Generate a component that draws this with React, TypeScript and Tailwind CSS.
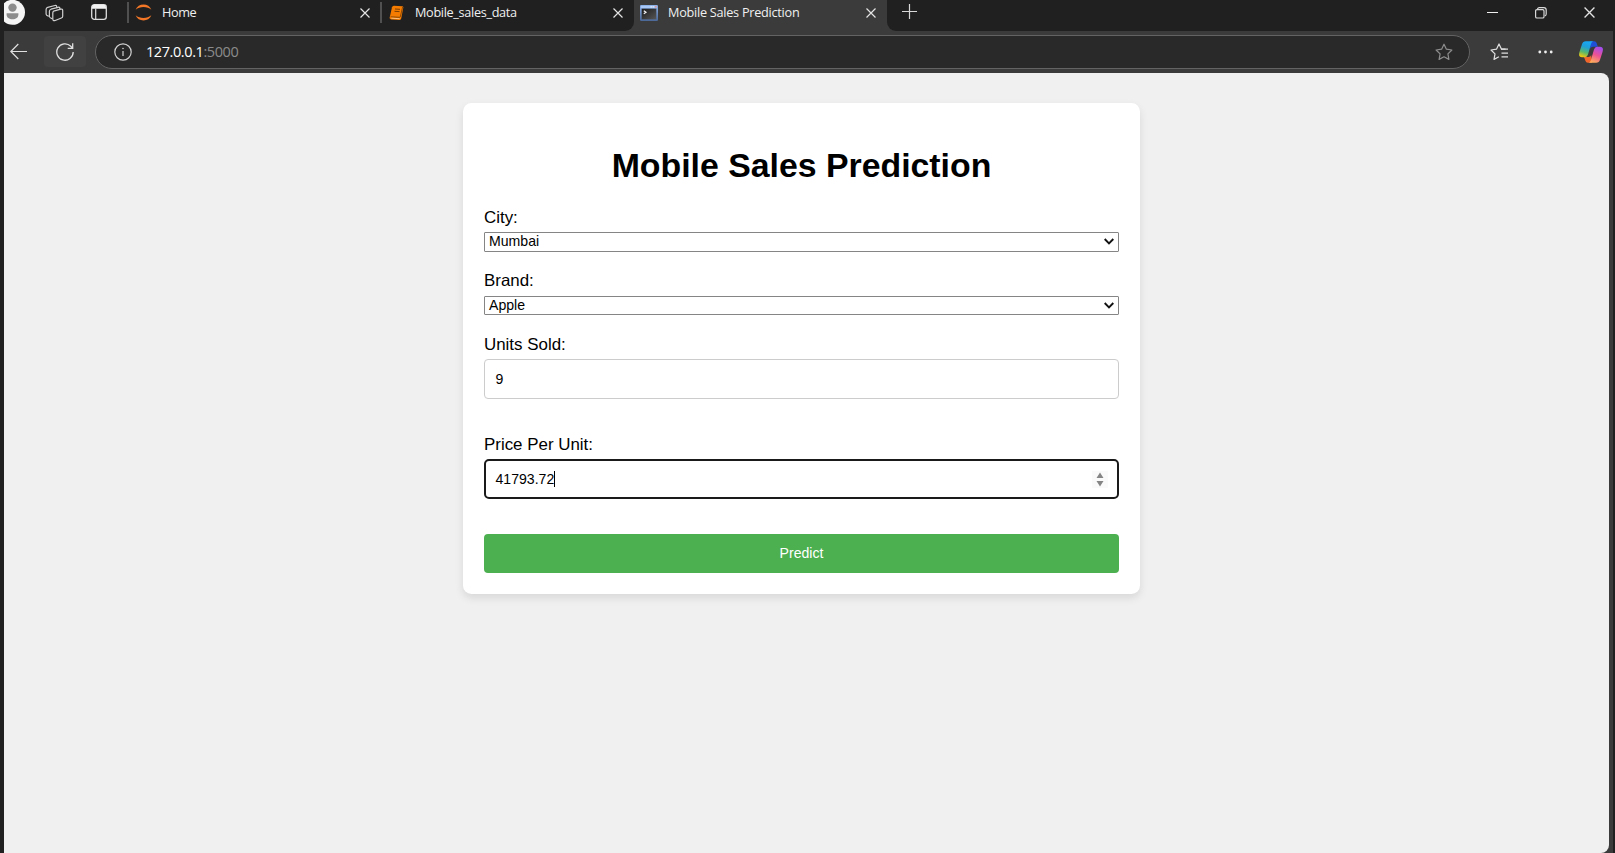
import type { ReactNode } from 'react';

function CloseIcon({ size = 10 }: { size?: number }) {
  return (
    <svg width={size} height={size} viewBox="0 0 10 10" fill="none" stroke="#e4e4e4" strokeWidth="1.2">
      <path d="M0.5 0.5L9.5 9.5M9.5 0.5L0.5 9.5" />
    </svg>
  );
}

function ProfileIcon() {
  return (
    <svg width="21" height="25" viewBox="4 0 21 25">
      <circle cx="12.5" cy="12.3" r="12.5" fill="#f5f5f5" />
      <circle cx="12.5" cy="7.6" r="4.2" fill="#8c8c8c" />
      <path d="M6.6 13.3h11.8v1.2c0 3.2-2.6 4.7-5.9 4.7s-5.9-1.5-5.9-4.7z" fill="#8c8c8c" />
    </svg>
  );
}

function WorkspacesIcon() {
  return (
    <svg width="20" height="20" viewBox="0 0 20 20" fill="none" stroke="#cfcfcf" strokeWidth="1.2" strokeLinejoin="round" strokeLinecap="round">
      <path d="M9.600 8.200l7.200-2q1.900-.4 1.900 1.300v5.800q0 1.300-1.300 1.700l-6.200 2.500q-2.400.8-2.400-1.500v-6q0-1.400.8-1.800z" />
      <path d="M15.900 6v-.6q-.2-1.500-1.800-1.100L7 6.200Q5.400 6.700 5.400 8.300v5.200q.2 1.500 2.600 2.100" />
      <path d="M12.700 4.200v-.7q-.2-1.400-1.800-1L3.700 4.400Q2.100 4.900 2.100 6.500v4.700q.2 1.500 2.300 2" />
    </svg>
  );
}

function TabActionsIcon() {
  return (
    <svg width="16" height="16" viewBox="0 0 16 16" fill="none">
      <rect x="0.700" y="0.700" width="14.600" height="14.600" rx="2.600" stroke="#dedede" strokeWidth="1.300" />
      <path d="M1 4.800V3q0-2.300 2.300-2.300h9.400Q15 .7 15 3v1.800z" fill="#f2f2f2" />
      <path d="M4.700 4.500v10.800" stroke="#dedede" strokeWidth="1.200" />
    </svg>
  );
}

function JupyterIcon() {
  return (
    <svg width="17" height="17" viewBox="0 0 17 17" fill="#f37726">
      <path d="M0.600 5.700C2 2.300 5 .5 8.500.5s6.500 1.800 7.900 5.200C14.300 4 11.500 3.100 8.500 3.100S2.700 4 .6 5.700z" />
      <path d="M0.600 11.300c1.400 3.400 4.400 5.200 7.900 5.200s6.500-1.800 7.900-5.200c-2.100 1.700-4.900 2.600-7.900 2.600s-5.800-.9-7.900-2.600z" />
    </svg>
  );
}

function NotebookIcon() {
  return (
    <svg width="15" height="16" viewBox="0 0 15 16">
      <path d="M4.800.8L13.300 1.200q1.200.1 1 1.400L12.200 13.600q-.3 1.400-1.500 1.400L2 14.400Q.4 14.200.7 12.500L3 2.300Q3.400.8 4.800.8z" fill="#f57c00" />
      <path d="M1.600 11.800l8.800.5q.8 0 1-.8L13.600 2" fill="none" stroke="#5a2f06" strokeWidth="0.700" />
      <path d="M2.300 13.200l8.300.5" stroke="#ffd9b0" strokeWidth="0.700" />
      <path d="M6 4l5 .3M5.500 6.300l5 .3" stroke="#6d3805" strokeWidth="0.900" />
    </svg>
  );
}

function TerminalIcon() {
  return (
    <svg width="18" height="16" viewBox="0 0 18 16">
      <defs>
        <linearGradient id="termFrame" x1="0" y1="0" x2="0" y2="1">
          <stop offset="0" stopColor="#8fb4ec" />
          <stop offset="1" stopColor="#4a6796" />
        </linearGradient>
        <linearGradient id="termScreen" x1="0" y1="0" x2="1" y2="1">
          <stop offset="0" stopColor="#1c1c1c" />
          <stop offset="1" stopColor="#565656" />
        </linearGradient>
      </defs>
      <rect width="18" height="16" rx="1.200" fill="url(#termFrame)" />
      <path d="M1 1h16v2H1z" fill="#a9c8f5" />
      <path d="M10.500 1.200h1.500v1.300h-1.500zM12.700 1.200h1.500v1.300h-1.500z" fill="#dfe9fa" />
      <path d="M14.800 1.200h1.900v1.300h-1.900z" fill="#e08a8a" />
      <rect x="1.700" y="3.700" width="14.600" height="10.600" fill="url(#termScreen)" />
      <path d="M3.800 5.800l2.200 1.500-2.200 1.500" fill="none" stroke="#f5f5f5" strokeWidth="1.200" />
    </svg>
  );
}

function CopilotIcon() {
  return (
    <svg width="24" height="22" viewBox="0 0 24 22">
      <defs>
        <linearGradient id="copLeft" x1="0.600" y1="0" x2="0.300" y2="1">
          <stop offset="0" stopColor="#18a8f5" />
          <stop offset="0.350" stopColor="#1e9fd8" />
          <stop offset="0.700" stopColor="#59b86a" />
          <stop offset="1" stopColor="#f2c80f" />
        </linearGradient>
        <linearGradient id="copRight" x1="0.700" y1="0" x2="0.300" y2="1">
          <stop offset="0" stopColor="#a44df0" />
          <stop offset="0.500" stopColor="#ee5292" />
          <stop offset="1" stopColor="#ffb05c" />
        </linearGradient>
      </defs>
      <path d="M11 .3h4.300q1.800 0 2.400 1.900L18.800 5.700H14q-2 0-2.700 2z" fill="#1d50d6" />
      <path d="M13 21.700H8.800q-1.800 0-2.400-1.900L5 16h4.500q2 0 2.700-2z" fill="#f2662c" />
      <path d="M6.800.3h7.600q-1.700.3-2.300 2.400L9 13.600q-.8 2.600-3 2.600H3Q-.9 16.200.4 11.300L2.900 3.600Q3.900.3 6.800.3z" fill="url(#copLeft)" />
      <path d="M17.200 21.700H9.600q1.700-.3 2.300-2.400L15 8.400q.8-2.600 3-2.600h3q3.900 0 2.600 4.900l-2.500 7.700q-1 3.300-3.900 3.300z" fill="url(#copRight)" />
    </svg>
  );
}

function Separator() {
  return <div className="mt-[2px] h-[21px] w-[2px] shrink-0 bg-[#505050]" />;
}

function Tabs() {
  return (
    <div className="flex h-[31px] shrink-0 bg-[#3b3b3b] font-['Open_Sans','Noto_Sans',sans-serif] text-[12.700px] leading-[24px] text-[#f0f0f0]">
      <div className="flex w-[634px] shrink-0 rounded-br-[9px] bg-[#202020] pl-1">
        <ProfileIcon />
        <div className="ml-[19px] mt-[3px]"><WorkspacesIcon /></div>
        <div className="ml-[27px] mt-[4px]"><TabActionsIcon /></div>
        <div className="w-[20px]" />
        <Separator />
        <div className="ml-[6px] mt-[4px]"><JupyterIcon /></div>
        <span className="ml-[10px] w-[198px] tracking-[-0.400px]">Home</span>
        <div className="mt-[8px]"><CloseIcon /></div>
        <div className="w-[10px]" />
        <Separator />
        <div className="ml-[7px] mt-[5px]"><NotebookIcon /></div>
        <span className="ml-[11px] w-[198px] tracking-[-0.330px]">Mobile_sales_data</span>
        <div className="mt-[8px]"><CloseIcon /></div>
      </div>
      <div className="flex w-[253px] shrink-0 pl-[6px]">
        <div className="mt-[5px]"><TerminalIcon /></div>
        <span className="ml-[10px] w-[198px] tracking-[-0.260px]">Mobile Sales Prediction</span>
        <div className="mt-[8px]"><CloseIcon /></div>
      </div>
      <div className="flex flex-1 rounded-bl-[9px] bg-[#202020] pl-[15px]">
        <svg className="mt-[4px]" width="15" height="15" viewBox="0 0 15 15" stroke="#d8d8d8" strokeWidth="1.200">
          <path d="M7.500 0v15M0 7.500h15" />
        </svg>
        <svg className="ml-[570px] mt-[12px]" width="11" height="1" viewBox="0 0 11 1">
          <rect width="11" height="1" fill="#f0f0f0" />
        </svg>
        <svg className="ml-[37px] mt-[7px]" width="12" height="12" viewBox="0 0 12 12" fill="none" stroke="#d8d8d8" strokeWidth="1.200">
          <rect x="0.600" y="2.600" width="8.400" height="8.400" rx="1.300" />
          <path d="M2.600 2.200V1.800Q3 .6 4.200.6h4.600q2.400 0 2.400 2.400v4q0 1.500-1.400 2" />
        </svg>
        <div className="ml-[37px] mt-[7px]"><CloseIcon size={11} /></div>
      </div>
    </div>
  );
}

function Toolbar() {
  return (
    <div className="ml-1 mr-[2px] flex h-[42px] shrink-0 items-start bg-[#3b3b3b] pt-1">
      <svg className="ml-[6px] mt-[8px]" width="17" height="17" viewBox="0 0 17 17" fill="none" stroke="#e0e0e0" strokeWidth="1.200">
        <path d="M17 8.500H.8M8.300 1L.8 8.500 8.300 16" />
      </svg>
      <div className="ml-[17px] mt-px flex h-[31px] w-[42px] items-center justify-center rounded-[4px] bg-[#414141]">
        <svg width="18" height="18" viewBox="0 0 18 18" fill="none" stroke="#e0e0e0" strokeWidth="1.300">
          <path d="M17.200 9A8.200 8.200 0 1 1 14.800 3.200l1.700 1.900M16.700.3v5h-5" />
        </svg>
      </div>
      <div className="ml-[9px] flex h-[34px] w-[1375px] items-center rounded-full border border-[#636363] bg-[#292929] pl-[18px] pr-[16px]">
        <svg width="18" height="18" viewBox="0 0 18 18" fill="none" stroke="#d2d2d2" strokeWidth="1.200">
          <circle cx="9" cy="9" r="8.200" />
          <path d="M9 8v5" />
          <circle cx="9" cy="5.500" r="0.500" fill="#d2d2d2" strokeWidth="0.600" />
        </svg>
        <span className="mb-px ml-[14px] flex-1 font-['Open_Sans','Noto_Sans',sans-serif] text-[14.500px] leading-5 tracking-[-0.420px] text-white">
          127.0.0.1<span className="text-[#8b8b8b]">:5000</span>
        </span>
        <svg width="18" height="18" viewBox="0 0 18 18" fill="none" stroke="#8e8e8e" strokeWidth="1.200" strokeLinejoin="round">
          <path d="M9 1.200l2.400 5 5.500.8-4 3.900 1 5.500L9 13.800l-4.900 2.600 1-5.500-4-3.900 5.500-.8z" />
        </svg>
      </div>
      <svg className="ml-[20px] mt-[8px]" width="18" height="18" viewBox="0 0 18 18" fill="none" stroke="#e0e0e0" strokeWidth="1.200" strokeLinejoin="round">
        <path d="M15.500 6.200H11.500L9 1 6.600 6.100 1 7l4 3.900-1 5.500 4.900-2.600" />
        <path d="M11 6.200h7M11.500 10.200H18M11.500 13.800H18" />
      </svg>
      <svg className="ml-[30px] mt-[15px]" width="15" height="4" viewBox="0 0 15 4" fill="#eeeeee">
        <circle cx="1.800" cy="2" r="1.400" /><circle cx="7.500" cy="2" r="1.400" /><circle cx="13.200" cy="2" r="1.400" />
      </svg>
      <div className="ml-[26px] mt-[6px]"><CopilotIcon /></div>
    </div>
  );
}

function FieldLabel({ children }: { children: ReactNode }) {
  return <div className="mb-[5px] h-[21px] pt-[0.500px] leading-[21px]">{children}</div>;
}

function SelectBox({ children }: { children: ReactNode }) {
  return (
    <div className="flex h-[19.500px] items-center justify-between rounded-[1px] border border-[#858585] bg-white pl-[4px] pr-[4px] text-[14.100px] leading-[17px]">
      <span>{children}</span>
      <svg width="10" height="7" viewBox="0 0 10 7" fill="none" stroke="#111" strokeWidth="1.900">
        <path d="M0.700 1L5 5.300 9.300 1" />
      </svg>
    </div>
  );
}

function PredictionCard() {
  return (
    <main className="h-[491px] w-[677px] rounded-[8.500px] bg-white px-[21px] pt-[42px] shadow-[0_4px_8px_rgba(0,0,0,0.1)]">
      <h1 className="h-[61px] text-center text-[33.850px] font-bold leading-[40px]">Mobile Sales Prediction</h1>
      <div className="h-[63.500px]">
        <FieldLabel>City:</FieldLabel>
        <SelectBox>Mumbai</SelectBox>
      </div>
      <div className="h-[63.500px]">
        <FieldLabel>Brand:</FieldLabel>
        <SelectBox>Apple</SelectBox>
      </div>
      <div className="h-[100px]">
        <FieldLabel>Units Sold:</FieldLabel>
        <div className="flex h-[40px] items-center rounded-[4px] border border-[#cccccc] pl-[10.500px] pt-px text-[14.100px]">9</div>
      </div>
      <div className="h-[101px]">
        <FieldLabel>Price Per Unit:</FieldLabel>
        <div className="flex h-[40px] items-center rounded-[5px] border-2 border-[#1a1a1a] pl-[9.500px] pr-[9px] text-[14.100px]">
          <span className="pt-px">41793.72</span>
          <span className="h-[16px] w-px bg-black" />
          <svg className="ml-auto bg-[#fafafa]" width="16" height="17" viewBox="0 0 16 17" fill="#858585">
            <path d="M4.500 7L8 1.500 11.500 7zM4.500 10L8 15.500 11.500 10z" />
          </svg>
        </div>
      </div>
      <button className="h-[39px] w-full rounded-[4px] bg-[#4caf50] text-[14.100px] text-white">Predict</button>
    </main>
  );
}

export default function App() {
  return (
    <div className="flex h-[853px] w-[1615px] flex-col overflow-hidden bg-[#202020]">
      <Tabs />
      <Toolbar />
      <div className="ml-1 mr-[2px] flex-1 bg-[#3b3b3b] pr-[4px]">
        <div className="flex h-full justify-center rounded-r-[8px] bg-[#f0f0f0] pr-[10px] pt-[30px] font-['Liberation_Sans',Arial,sans-serif] text-[16.920px] text-black">
          <PredictionCard />
        </div>
      </div>
    </div>
  );
}
